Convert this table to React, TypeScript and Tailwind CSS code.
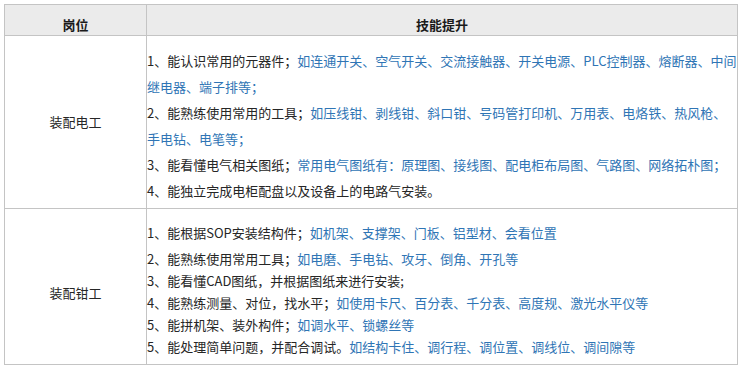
import React from 'react';

type Seg = { text: string; blue?: boolean };

const font = {
  fontFamily: '"Microsoft YaHei", "Noto Sans CJK SC", "Noto Sans", sans-serif',
};

// each entry is one printed line (the reference wraps by hand)
const electricianLines: Seg[][] = [
  [
    { text: '1、能认识常用的元器件；' },
    { text: '如连通开关、空气开关、交流接触器、开关电源、PLC控制器、熔断器、中间', blue: true },
  ],
  [{ text: '继电器、端子排等；', blue: true }],
  [
    { text: '2、能熟练使用常用的工具；' },
    { text: '如压线钳、剥线钳、斜口钳、号码管打印机、万用表、电烙铁、热风枪、', blue: true },
  ],
  [{ text: '手电钻、电笔等；', blue: true }],
  [
    { text: '3、能看懂电气相关图纸；' },
    { text: '常用电气图纸有：原理图、接线图、配电柜布局图、气路图、网络拓朴图；', blue: true },
  ],
  [{ text: '4、能独立完成电柜配盘以及设备上的电路气安装。' }],
];

const fitterLines: Seg[][] = [
  [
    { text: '1、能根据SOP安装结构件；' },
    { text: '如机架、支撑架、门板、铝型材、会看位置', blue: true },
  ],
  [
    { text: '2、能熟练使用常用工具；' },
    { text: '如电磨、手电钻、攻牙、倒角、开孔等', blue: true },
  ],
  [{ text: '3、能看懂CAD图纸，并根据图纸来进行安装;' }],
  [
    { text: '4、能熟练测量、对位，找水平；' },
    { text: '如使用卡尺、百分表、千分表、高度规、激光水平仪等', blue: true },
  ],
  [
    { text: '5、能拼机架、装外构件；' },
    { text: '如调水平、锁螺丝等', blue: true },
  ],
  [
    { text: '5、能处理简单问题，并配合调试。' },
    { text: '如结构卡住、调行程、调位置、调线位、调间隙等', blue: true },
  ],
];

function Line({ segs, className }: { segs: Seg[]; className: string }) {
  return (
    <div className={`whitespace-nowrap ${className}`}>
      {segs.map((s, i) => (
        <span key={i} className={s.blue ? 'text-[#2f75b5]' : 'text-[#262626]'}>
          {s.text}
        </span>
      ))}
    </div>
  );
}

export default function App() {
  return (
    <div className="w-[740px] h-[370px] bg-white pt-[4px] pl-[4px]" style={font}>
      <div className="w-[734px] border border-[#c4c4c4] text-[13px]">
        {/* header */}
        <div className="grid grid-cols-[142px_1fr] h-[31px] bg-[#ebebeb] border-b border-[#c4c4c4] font-bold text-[#1a1a1a]">
          <div className="border-r border-[#c4c4c4] text-center pt-[10px] leading-[19px]">岗位</div>
          <div className="text-center pt-[10px] leading-[19px]">技能提升</div>
        </div>

        {/* 装配电工 */}
        <div className="grid grid-cols-[142px_1fr] h-[173px] border-b border-[#c4c4c4]">
          <div className="border-r border-[#c4c4c4] flex items-center justify-center text-[#262626]">
            装配电工
          </div>
          <div className="pt-[12px]">
            {electricianLines.map((l, i) => (
              <Line key={i} segs={l} className="leading-[26px]" />
            ))}
          </div>
        </div>

        {/* 装配钳工 */}
        <div className="grid grid-cols-[142px_1fr] h-[155px]">
          <div className="border-r border-[#c4c4c4] flex items-center justify-center pt-[12px] text-[#262626]">
            装配钳工
          </div>
          <div className="pt-[13px]">
            {fitterLines.map((l, i) => (
              <Line key={i} segs={l} className={i === 0 ? 'leading-[22px] mb-[4px]' : 'leading-[22px]'} />
            ))}
          </div>
        </div>
      </div>
    </div>
  );
}
